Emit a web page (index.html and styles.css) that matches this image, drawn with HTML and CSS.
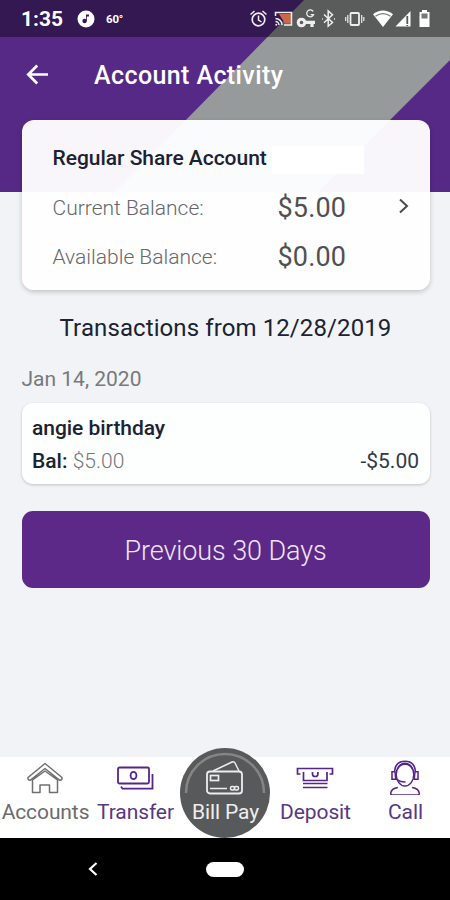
FILE: index.html
```html
<!DOCTYPE html>
<html lang="en">
<head>
<meta charset="utf-8">
<title>Account Activity</title>
<link rel="stylesheet" href="styles.css">
</head>
<body>
<div class="phone">
  <header class="hero">
    <div class="status">
      <span class="clock">1:35</span>
      <svg class="music" width="18" height="18" viewBox="0 0 18 18"><circle cx="9" cy="9" r="8.5" fill="#fff"/><circle cx="7.6" cy="11" r="2.2" fill="#34184f"/><path d="M9 11V4.5h3v2H9.8V11z" fill="#34184f"/></svg>
      <span class="temp">60°</span>
      <svg class="tray" width="186" height="22" viewBox="248 8 186 22" fill="none" stroke="#eee">
        <circle cx="258.500" cy="19.500" r="6.300" stroke-width="1.700"/><path d="M258.500 15.500v4.500l3 2M250.500 14.500l4-3.500M262.500 11l4 3.500" stroke-width="1.500"/>
        <path d="M279 14h12v9.500h-6z" fill="#c8694d" stroke="none"/><path d="M275.500 16v-3.500h16V25H284M275.500 18.500a6.500 6.500 0 0 1 6.500 6.500M275.500 21.500a3.500 3.500 0 0 1 3.500 3.500" stroke-width="1.500"/><circle cx="276.300" cy="24.700" r="1" fill="#eee" stroke="none"/>
        <circle cx="301.500" cy="22.500" r="3.300" stroke-width="3"/><path d="M305 22.300h10M312 22v5" stroke-width="3.200"/><path d="M313.200 11.500a3.500 3.500 0 1 0 .3 3.200h-2.800" stroke-width="1.300"/>
        <path d="M324 14.500l8.500 8-4.300 3.700V11l4.300 3.700-8.500 8M322 19h.8M334 19h1" stroke-width="1.500"/>
        <rect x="350.500" y="13" width="8.500" height="12" rx="1" stroke-width="1.800"/><path d="M347.800 15v8M361.700 15v8M345.700 17v4M363.800 17v4" stroke-width="1.200"/>
        <path d="M373 14.300q10-7.500 20 0L383 27z" fill="#fff" stroke="none"/><path d="M375.500 16.200q7.500-5.200 15 0" stroke="#777" stroke-width="1.300"/>
        <path d="M395.500 26.500L410.500 11v15.500z" fill="#fff" stroke="none"/><path d="M407.300 16v8M407.300 25v1" stroke="#555" stroke-width="1.800"/>
        <path d="M419.500 12h2.500v-2h5v2h2.500v15h-10z" fill="#fff" stroke="none"/><path d="M421.500 13.500h6v5h-6z" fill="#777" stroke="none"/>
      </svg>
    </div>
    <div class="titlebar">
      <svg width="22" height="22" viewBox="0 0 22 22" fill="none" stroke="#fff" stroke-width="2.700"><path d="M22 10.500H2.500M11.200 1.500L2.300 10.500l8.900 9"/></svg>
      <h1>Account Activity</h1>
    </div>
  </header>

  <main>
    <section class="card">
      <div class="name"><span>Regular Share Account</span><i class="mask"></i></div>
      <div class="row"><span class="label">Current Balance:</span><span class="amount">$5.00</span>
        <svg width="12" height="16" viewBox="0 0 12 16" fill="none" stroke="#4a4a4a" stroke-width="2"><path d="M2 .5L9 7l-7 6.500"/></svg></div>
      <div class="row"><span class="label">Available Balance:</span><span class="amount">$0.00</span></div>
    </section>
    <h2>Transactions from 12/28/2019</h2>
    <div class="date">Jan 14, 2020</div>
    <section class="item">
      <div class="desc">angie birthday</div>
      <div class="line"><span><b>Bal:</b> <span class="bal">$5.00</span></span><span class="delta">-$5.00</span></div>
    </section>
    <button class="previous">Previous 30 Days</button>
  </main>

  <nav class="tabs">
    <div class="tab gray">
      <svg width="38" height="36" viewBox="0 0 38 36" fill="none" stroke="#707070" stroke-width="1.500" stroke-linejoin="round"><path d="M19 4.500L2 18.500Q1.500 21 4.200 21.300L19 9.500 33.800 21.300Q36.500 21 36 18.500zM6.500 21V33.500H14V26h9.500v7.500H31.500V21L19 12z"/></svg>
      <span>Accounts</span>
    </div>
    <div class="tab">
      <svg width="40" height="36" viewBox="0 0 40 36" fill="none" stroke="#56258a" stroke-width="1.800"><rect x="3" y="8.500" width="31" height="16" rx="1.500"/><ellipse cx="18.500" cy="16.500" rx="2.900" ry="3.700"/><path d="M37.500 15v14.700H7.500L6 27.500"/></svg>
      <span>Transfer</span>
    </div>
    <div class="tab pay">
      <svg class="arc" width="90" height="90" viewBox="0 0 90 90" fill="none"><path d="M6 45a39 39 0 0 1 78 0" stroke="#858585" stroke-width="2.500"/></svg>
      <svg width="40" height="36" viewBox="0 0 40 36" fill="none" stroke="#eee" stroke-width="1.800"><rect x="2" y="12.500" width="35" height="22" rx="3"/><path d="M8 12L27 3q2-.8 3 1l4 8M5 29.500h17" stroke-width="1.500"/><rect x="5.500" y="16.500" width="8" height="5" stroke-width="1.700"/><rect x="25.500" y="27.500" width="4" height="3.500" rx="1.500" stroke-width="1.500"/><rect x="29.500" y="27.500" width="4" height="3.500" rx="1.500" stroke-width="1.500"/></svg>
      <span>Bill Pay</span>
    </div>
    <div class="tab">
      <svg width="40" height="36" viewBox="0 0 40 36" fill="none" stroke="#56258a" stroke-width="1.700"><path d="M5.500 15H2.500V9.500h35V15H34.500M8.500 13v8.500h23.500V13M8 24.500h24.500M8 28.500h24.500"/><path d="M17.500 13v2q0 2.500 2.700 2.500t2.700-2.500V13"/></svg>
      <span>Deposit</span>
    </div>
    <div class="tab">
      <svg width="36" height="40" viewBox="0 0 36 40" fill="none" stroke="#56258a" stroke-width="1.600"><ellipse cx="18" cy="18.500" rx="9.300" ry="12"/><path d="M7 15Q8 4.500 18 4.500T29 15M10 13Q12 7.500 18 7.500T26 13M7.500 15.500H4.300v8h4zM28.500 15.500h3.200v8h-4zM9.500 23q2 3.300 9 3.300M10.500 32Q3.500 33 3 38q-.2 2 2 2h26q2.200 0 2-2-.5-5-7.500-6"/></svg>
      <span>Call</span>
    </div>
  </nav>
  <footer class="system">
    <svg width="10" height="14" viewBox="0 0 10 14" fill="none" stroke="#fff" stroke-width="2.200"><path d="M8.500 1L2 7l6.500 6"/></svg>
    <span class="pill"></span>
  </footer>
</div>
</body>
</html>
```
FILE: styles.css
```css
* { box-sizing: border-box; }
body { margin: 0; background: #f1f3f6; font-family: Roboto, "Liberation Sans", sans-serif; }
.phone { width: 450px; height: 900px; display: flex; flex-direction: column; overflow: hidden; background: #f1f3f6; }

.hero { position: relative; height: 192px; flex: none; background: #562987; color: #fff; }
.hero::before { content: ""; position: absolute; inset: 0; background: #979a9a; clip-path: polygon(304px 0, 450px 0, 450px 60px, 318px 192px, 115px 192px); }
.status { position: relative; height: 37px; display: flex; align-items: center; padding-left: 21px; background: rgba(0, 0, 0, .4); }
.clock { width: 56px; font-size: 21px; font-weight: 700; }
.music { flex: none; }
.temp { margin-left: 11px; width: 142px; font-size: 11.5px; font-weight: 700; letter-spacing: -.2px; }
.tray { flex: none; }
.titlebar { position: relative; height: 75px; display: flex; align-items: center; padding-left: 26px; gap: 46px; }
h1 { margin: 2px 0 0; font-size: 25px; font-weight: 500; letter-spacing: .4px; white-space: nowrap; }

main { position: relative; flex: 1; margin-top: -72px; padding: 0 20.500px 0 21.500px; color: #1b2233; }
.card { height: 170px; border-radius: 12px; padding: 14px 18px 0 31px; background: rgba(254, 254, 255, .965); box-shadow: 0 2px 5px rgba(0, 0, 0, .2); }
.name { height: 48px; display: flex; align-items: flex-start; padding-top: 12px; font-size: 21px; line-height: 25px; font-weight: 500; letter-spacing: -.03px; white-space: nowrap; }
.name span { width: 219px; }
.mask { width: 92px; height: 28px; background: #fff; }
.row { height: 49px; display: flex; align-items: center; padding-top: 2px; }
.label { width: 225px; font-size: 21px; font-weight: 300; color: #65686c; white-space: nowrap; }
.amount { width: 120px; font-size: 27px; color: #505052; letter-spacing: .15px; }
.row svg { margin-top: -2px; }
h2 { margin: 24px 0 0; height: 28px; line-height: 28px; text-align: center; font-size: 24px; font-weight: 400; letter-spacing: .1px; white-space: nowrap; }
.date { margin-top: 25px; height: 24px; line-height: 24px; font-size: 21px; color: #76797d; }
.item { margin-top: 12px; height: 81px; padding: 11px 10.500px 0; border-radius: 11px; background: #fdfefe; box-shadow: 0 1px 3px rgba(0, 0, 0, .2); font-size: 21px; }
.desc { height: 28px; line-height: 28px; font-weight: 500; letter-spacing: -.05px; }
.line { height: 28px; line-height: 28px; margin-top: 5px; display: flex; justify-content: space-between; }
.line b { font-weight: 500; }
.bal { font-weight: 300; color: #74777b; }
.delta { color: #303949; }
.previous { display: block; width: 100%; height: 77px; margin: 27px 0 0; padding: 3px 0 0; border: 0; border-radius: 11px; background: #5c2988; color: #eee6f7; font: 300 27px Roboto, sans-serif; letter-spacing: -.1px; }

.tabs { height: 81px; flex: none; display: grid; grid-template-columns: repeat(5, 90px); background: #fff; color: #583783; }
.tab { display: flex; flex-direction: column; align-items: center; justify-content: flex-end; height: 68px; font-size: 21px; line-height: 26px; letter-spacing: -.1px; white-space: nowrap; }
.tab > svg { margin-bottom: 4px; }
.tab > span { padding-left: 1px; }
.gray { color: #6b6b6d; }
.pay { position: relative; height: 90px; margin-top: -9px; padding-bottom: 13px; border-radius: 50%; background: #58595a; color: #eee; }
.pay .arc { position: absolute; inset: 0; margin: 0; }
.system { height: 62px; flex: none; display: flex; align-items: center; padding-left: 88px; gap: 108px; background: #000; }
.pill { width: 38px; height: 15px; border-radius: 8px; background: #fff; }
```
